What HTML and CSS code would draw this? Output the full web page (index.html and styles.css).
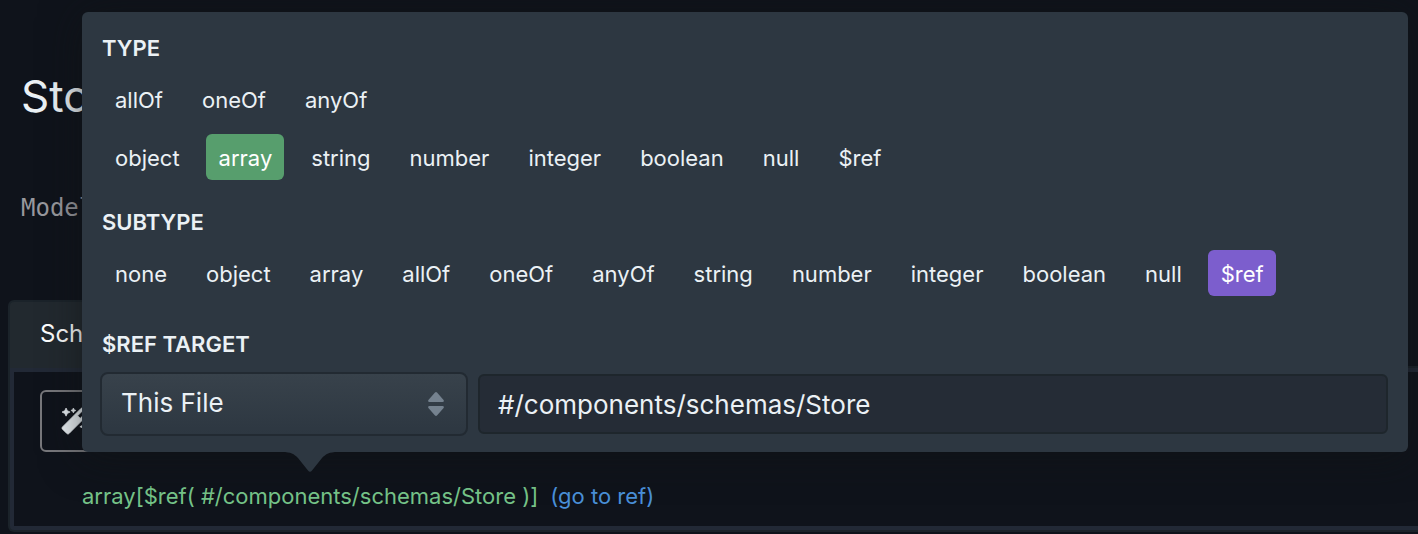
FILE: index.html
```html
<!DOCTYPE html>
<html lang="en">
<head>
<meta charset="utf-8">
<title>Store model</title>
<link rel="stylesheet" href="styles.css">
</head>
<body>
<main class="page">
  <h1 class="title">Store</h1>
  <p class="kind">Model</p>
  <section class="editor">
    <button type="button" class="tab">Schema</button>
    <div class="frame">
      <div class="frame-body">
        <button type="button" class="generate" aria-label="Generate from JSON">
          <svg class="wand" viewBox="0 0 512 512" aria-hidden="true"><path fill="currentColor" stroke="currentColor" stroke-width="14" d="M224 96l16-32 32-16-32-16-16-32-16 32-32 16 32 16 16 32zM80 160l26.66-53.33L160 80l-53.34-26.67L80 0 53.34 53.33 0 80l53.34 26.67L80 160zm352 128l-26.66 53.33L352 368l53.34 26.67L432 448l26.66-53.33L512 368l-53.34-26.67L432 288zm70.62-193.77L417.77 9.38C411.53 3.12 403.34 0 395.15 0c-8.19 0-16.38 3.12-22.63 9.38L9.38 372.52c-12.5 12.5-12.5 32.76 0 45.25l84.85 84.85c6.25 6.25 14.44 9.37 22.62 9.37 8.19 0 16.38-3.12 22.63-9.37l363.14-363.15c12.5-12.48 12.5-32.75 0-45.24zM359.45 203.46l-50.91-50.91 86.6-86.6 50.91 50.91-86.6 86.6z"/></svg>
        </button>
        <div class="schema-row">
          <span class="schema-type">array[$ref( #/components/schemas/Store )]</span>
          <a class="schema-link" href="#ref">(go to ref)</a>
        </div>
      </div>
    </div>
  </section>
</main>

<div class="popover" role="dialog" aria-label="Type picker">
  <section class="group">
    <h2 class="label">TYPE</h2>
    <div class="choices">
      <button type="button" class="choice">allOf</button>
      <button type="button" class="choice">oneOf</button>
      <button type="button" class="choice">anyOf</button>
    </div>
    <div class="choices choices-next">
      <button type="button" class="choice">object</button>
      <button type="button" class="choice choice-green">array</button>
      <button type="button" class="choice">string</button>
      <button type="button" class="choice">number</button>
      <button type="button" class="choice">integer</button>
      <button type="button" class="choice">boolean</button>
      <button type="button" class="choice">null</button>
      <button type="button" class="choice">$ref</button>
    </div>
  </section>
  <section class="group">
    <h2 class="label">SUBTYPE</h2>
    <div class="choices">
      <button type="button" class="choice">none</button>
      <button type="button" class="choice">object</button>
      <button type="button" class="choice">array</button>
      <button type="button" class="choice">allOf</button>
      <button type="button" class="choice">oneOf</button>
      <button type="button" class="choice">anyOf</button>
      <button type="button" class="choice">string</button>
      <button type="button" class="choice">number</button>
      <button type="button" class="choice">integer</button>
      <button type="button" class="choice">boolean</button>
      <button type="button" class="choice">null</button>
      <button type="button" class="choice choice-purple">$ref</button>
    </div>
  </section>
  <section class="target">
    <h2 class="label target-label" id="target-label">$REF TARGET</h2>
    <div class="fields">
      <div class="select-wrap">
        <select class="select" aria-labelledby="target-label">
          <option>This File</option>
        </select>
        <svg class="caret" viewBox="0 0 16 24" aria-hidden="true"><path fill="currentColor" d="M7 .4q1-.8 2 0L15.600 8q.8 2-1 2H1.400q-1.800 0-1-2zM7 23.600q1 .8 2 0L15.600 16q.8-2-1-2H1.400q-1.800 0-1 2z"/></svg>
      </div>
      <input class="input" type="text" value="#/components/schemas/Store" aria-labelledby="target-label">
    </div>
  </section>
  <svg class="arrow" viewBox="0 0 56 21" aria-hidden="true"><path fill="currentColor" d="M0 0V1C9 1 12 3 16 7L26 19.500Q28 22 30 19.500L40 7C44 3 47 1 56 1V0z"/></svg>
</div>
</body>
</html>
```
FILE: styles.css
```css
* {
  box-sizing: border-box;
}

body {
  margin: 0;
  background: #0f131b;
  color: #ebf1f5;
  font-family: Inter, "Liberation Sans", sans-serif;
  overflow: hidden;
}

button,
select,
input {
  font-family: inherit;
  color: inherit;
}

.page {
  padding: 68px 0 0 8px;
}

.title {
  margin: 0 0 0 13px;
  font-size: 44px;
  line-height: 56px;
  font-weight: 400;
}

.kind {
  margin: 68px 0 0 13px;
  font-family: "DejaVu Sans Mono", monospace;
  font-size: 24px;
  line-height: 32px;
  color: #98989d;
}

.editor {
  margin-top: 76px;
}

.tab {
  display: block;
  position: relative;
  height: 68px;
  margin-bottom: -2px;
  padding: 0 30px 4px;
  border: 2px solid #1b232a;
  border-bottom: 0;
  border-radius: 6px 6px 0 0;
  background: #22292f;
  color: #fff;
  font-size: 24px;
}

.frame {
  border: 2px solid #1b232a;
  border-right: 0;
  border-radius: 0 0 0 6px;
  background: #222936;
  padding: 4px 0 4px 4px;
}

.frame-body {
  background: #0f131b;
  padding: 18px 26px 16px;
}

.generate {
  display: flex;
  align-items: center;
  width: 160px;
  height: 62px;
  padding: 0 20px;
  border: 2px solid #77777b;
  border-radius: 6px;
  background: none;
}

.wand {
  width: 26px;
  height: 26px;
  overflow: visible;
}

.schema-row {
  display: flex;
  gap: 12px;
  margin: 30px 0 0 42px;
  font-size: 22px;
  line-height: 28px;
}

.schema-type {
  color: #76c489;
}

.schema-link {
  color: #4a90d9;
  text-decoration: none;
}

.popover {
  position: absolute;
  top: 12px;
  left: 82px;
  right: 10px;
  padding: 24px 20px 16px 18px;
  border-radius: 6px;
  background: #2d3741;
  box-shadow: 0 4px 40px rgba(17, 20, 20, 0.6);
}

.group {
  margin-left: 2px;
  margin-bottom: 30px;
}

.label {
  margin: 0 0 16px;
  font-size: 22px;
  line-height: 24px;
  font-weight: 600;
}

.target {
  margin-top: 36px;
}

.target-label {
  margin-left: 2px;
}

.choices {
  display: flex;
  gap: 14px;
}

.choices-next {
  margin-top: 12px;
}

.choice {
  height: 46px;
  padding: 2px 12px 0 13px;
  border: 0;
  border-radius: 6px;
  background: none;
  font-size: 22px;
}

.choice-green {
  background: #579e6d;
  color: #fff;
}

.choice-purple {
  background: #7c5ecd;
  color: #fff;
}

.fields {
  display: flex;
  align-items: center;
  gap: 10px;
}

.select-wrap {
  position: relative;
  flex: 0 0 368px;
}

.select {
  display: block;
  appearance: none;
  width: 100%;
  height: 64px;
  padding: 0 19px 4px;
  border: 2px solid #222a32;
  border-radius: 8px;
  background: linear-gradient(#38424b, #2d3741);
  font-size: 26px;
}

.caret {
  position: absolute;
  top: 20px;
  right: 24px;
  width: 16px;
  height: 24px;
  color: #75828f;
  pointer-events: none;
}

.input {
  flex: 1;
  min-width: 0;
  height: 60px;
  padding: 0 18px;
  border: 2px solid #1e262c;
  border-radius: 6px;
  background: #252c36;
  font-size: 26px;
}

.arrow {
  position: absolute;
  top: calc(100% - 1px);
  left: 200px;
  width: 56px;
  height: 21px;
  color: #2d3741;
}
```
